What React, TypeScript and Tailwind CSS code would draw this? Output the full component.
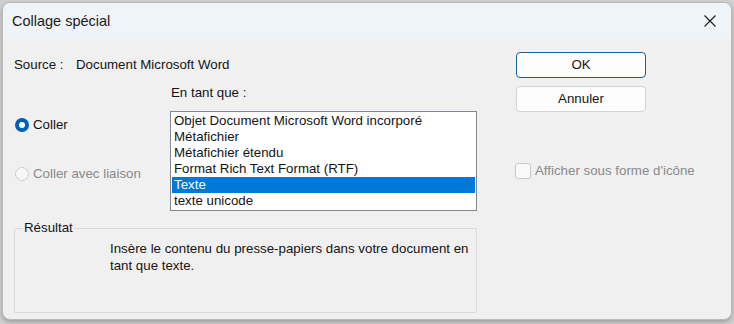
import React from "react";

const items = [
  "Objet Document Microsoft Word incorporé",
  "Métafichier",
  "Métafichier étendu",
  "Format Rich Text Format (RTF)",
  "Texte",
  "texte unicode",
];

export default function App() {
  return (
    <div
      className="w-[734px] h-[324px] bg-[#d0d0d0] overflow-hidden pt-[2px] pl-[2px]"
      style={{ fontFamily: '"Liberation Sans", Arial, sans-serif' }}
    >
      <div className="w-[730px] h-[318px] rounded-lg border border-[#b9b9b9] bg-[#f0f0f0] overflow-hidden shadow-[0_2px_4px_rgba(0,0,0,0.25)] flex flex-col">
        {/* Title bar */}
        <div className="h-[36px] bg-[#eff4f9] flex items-center justify-between pl-[9px] pr-[14px] shrink-0">
          <span className="text-[14.5px] text-[#1b1b1b] leading-none">Collage spécial</span>
          <svg width="12" height="12" viewBox="0 0 12 12" className="mr-[1px]">
            <path d="M0.5 0.5 L11.5 11.5 M11.5 0.5 L0.5 11.5" stroke="#1b1b1b" strokeWidth="1.1" fill="none" />
          </svg>
        </div>
        {/* Body */}
        <div className="flex flex-1 text-[13.3px] text-[#141414] leading-[16px]">
          {/* Left column */}
          <div className="ml-[11px] w-[463px] flex flex-col">
            <div className="mt-[18px] h-[16px] flex">
              <span className="w-[62px]">Source :</span>
              <span>Document Microsoft Word</span>
            </div>
            <div className="flex mt-[12px]">
              <div className="w-[156px] flex flex-col">
                <div className="mt-[33px] flex items-center h-[14px]">
                  <span className="ml-[1px] w-[14px] h-[14px] rounded-full bg-[#005fb8] flex items-center justify-center">
                    <span className="w-[6px] h-[6px] rounded-full bg-white" />
                  </span>
                  <span className="ml-[4px]">Coller</span>
                </div>
                <div className="mt-[35px] flex items-center h-[14px]">
                  <span className="ml-[1px] w-[14px] h-[14px] rounded-full border border-[#cfcfcf] bg-[#f7f7f7]" />
                  <span className="ml-[4px] text-[#8a8a8a]">Coller avec liaison</span>
                </div>
              </div>
              <div className="flex flex-col">
                <div className="h-[16px] pl-[1px]">En tant que :</div>
                <div className="mt-[10px] w-[307px] h-[100px] border border-[#828790] bg-white p-[1px]">
                  {items.map((it) => (
                    <div
                      key={it}
                      className={
                        it === "Texte"
                          ? "h-[16px] px-[2px] bg-[#0078d7] text-white"
                          : "h-[16px] px-[2px]"
                      }
                    >
                      {it}
                    </div>
                  ))}
                </div>
              </div>
            </div>
            <fieldset className="mt-[9px] h-[93px] border border-[#dadada] rounded-[1px] pl-[95px] pr-[4px] pt-[4px] m-0">
              <legend className="ml-[-87px] px-[1px] text-[13.3px] leading-[16px]">Résultat</legend>
              <p className="leading-[17px]">
                Insère le contenu du presse-papiers dans votre document en tant que texte.
              </p>
            </fieldset>
          </div>
          {/* Right column */}
          <div className="ml-[39px] flex flex-col">
            <button className="mt-[13px] w-[130px] h-[26px] rounded-[4px] border border-[#1d5f92] bg-[#fdfdfd] text-[13.3px] text-[#141414]">
              OK
            </button>
            <button className="mt-[8px] w-[130px] h-[26px] rounded-[4px] border border-[#d3d3d3] bg-[#fdfdfd] text-[13.3px] text-[#141414]">
              Annuler
            </button>
            <div className="mt-[51px] flex items-center h-[16px] -ml-[1px]">
              <span className="w-[16px] h-[16px] rounded-[3px] border border-[#c8c8c8] bg-[#f9f9f9]" />
              <span className="ml-[4px] text-[#8a8a8a]">Afficher sous forme d'icône</span>
            </div>
          </div>
        </div>
      </div>
    </div>
  );
}
